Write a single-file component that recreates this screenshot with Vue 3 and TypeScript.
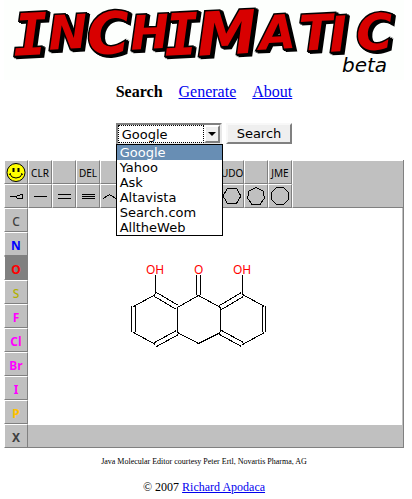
<script setup lang="ts">
import { ref } from 'vue'

interface LogoLetter {
  char: string
  x: number
  y: number
  size: number
  slab?: boolean
}

interface Atom {
  symbol: string
  color: string
  light?: boolean
}

const logo: LogoLetter[] = [
  { char: 'I', x: 14, y: 55, size: 58, slab: true },
  { char: 'N', x: 49, y: 49, size: 47 },
  { char: 'C', x: 88, y: 54, size: 58 },
  { char: 'H', x: 131, y: 49, size: 47 },
  { char: 'I', x: 165, y: 55, size: 58, slab: true },
  { char: 'M', x: 198, y: 55, size: 60 },
  { char: 'A', x: 260, y: 49, size: 47 },
  { char: 'T', x: 300, y: 50, size: 49 },
  { char: 'I', x: 330, y: 51, size: 49 },
  { char: 'C', x: 357, y: 50, size: 50 },
]

const engines = ['Google', 'Yahoo', 'Ask', 'Altavista', 'Search.com', 'AlltheWeb']
const engine = ref('Google')

const commands = ['smiley', 'CLR', '', 'DEL', '', '', '', '', '', 'UDO', '', 'JME']

const bonds = [
  { name: 'Stereo bond', path: 'M5 11.5H10L17 9.5V13.5H13L10 11.5' },
  { name: 'Single bond', path: 'M5 11.5H18' },
  { name: 'Double bond', path: 'M5 9.5H18M5 13.5H18' },
  { name: 'Triple bond', path: 'M5 9.5H18M5 11.5H18M5 13.5H18' },
  { name: 'Chain', path: 'M2 13.5L8.500 9.5L15 13.5L21 9.5' },
  { name: 'Ring 3', path: '' },
  { name: 'Ring 4', path: '' },
  { name: 'Ring 5', path: '' },
  { name: 'Ring 5 aromatic', path: '' },
  { name: 'Ring 6', path: 'M2 11L6.500 3.500H15.500L20 11L15.500 18.500H6.500Z' },
  { name: 'Ring 7', path: 'M11 2.500L18 6L19.500 13L15 19.500H7L2.500 13L4 6Z' },
  { name: 'Ring 8', path: 'M7.500 2.500H14.500L19.500 7.500V14.500L14.500 19.500H7.500L2.500 14.500V7.500Z' },
]

const atoms: Atom[] = [
  { symbol: 'C', color: '#404040', light: true },
  { symbol: 'N', color: '#0000ff' },
  { symbol: 'O', color: '#ff0000' },
  { symbol: 'S', color: '#b0b000', light: true },
  { symbol: 'F', color: '#ff00ff' },
  { symbol: 'Cl', color: '#ff00ff' },
  { symbol: 'Br', color: '#ff00ff' },
  { symbol: 'I', color: '#ff00ff' },
  { symbol: 'P', color: '#ffc000' },
  { symbol: 'X', color: '#404040' },
]
const atom = ref('O')
</script>

<template>
  <main class="page">
    <h1 class="brand">
      <svg class="logo" viewBox="0 0 400 80" role="img" aria-label="InChIMatic beta">
        <g class="letters" transform="translate(-4 0)">
          <text
            v-for="(l, i) in logo"
            :key="i"
            :x="l.x"
            :y="l.y"
            :font-size="l.size"
            :class="{ slab: l.slab }"
            :transform="`rotate(-3 ${l.x + 16} ${l.y})`"
          >{{ l.char }}</text>
        </g>
        <text class="beta" x="338" y="72">beta</text>
      </svg>
    </h1>

    <nav class="nav">
      <b>Search</b>
      <a href="#generate">Generate</a>
      <a href="#about">About</a>
    </nav>

    <form class="search" @submit.prevent>
      <div class="picker">
        <select v-model="engine" class="engine" aria-label="Search engine">
          <option v-for="e in engines" :key="e">{{ e }}</option>
        </select>
        <span class="arrow" aria-hidden="true">
          <svg width="8" height="4" viewBox="0 0 8 4"><path d="M0 0H8L4 4Z" /></svg>
        </span>
        <ul class="options" role="listbox" aria-label="Search engines">
          <li
            v-for="e in engines"
            :key="e"
            role="option"
            :aria-selected="e === engine"
            :class="{ current: e === engine }"
            @click="engine = e"
          >{{ e }}</li>
        </ul>
      </div>
      <button class="submit" type="submit">Search</button>
    </form>

    <section class="editor" aria-label="Molecule editor">
      <div class="toolbar">
        <button v-for="(c, i) in commands" :key="i" class="cell top" type="button">
          <svg v-if="c === 'smiley'" width="22" height="22" viewBox="0 0 22 22" aria-label="Smiley">
            <circle cx="11" cy="11.500" r="9" fill="#ffff00" stroke="#000" />
            <path d="M8.500 7V11M13.500 7V11" stroke="#000" stroke-width="2" />
            <path d="M5 13Q6 17 11 17T17 13M4 13.500L6 12.500M16 12.500L18 13.500" fill="none" stroke="#000" />
          </svg>
          <template v-else>{{ c }}</template>
        </button>
        <div class="rest"></div>
      </div>
      <div class="toolbar">
        <button v-for="b in bonds" :key="b.name" class="cell" type="button" :aria-label="b.name">
          <svg class="line" width="22" height="22" viewBox="0 0 22 22"><path :d="b.path" /></svg>
        </button>
        <div class="rest low"></div>
      </div>
      <div class="work">
        <div class="atoms">
          <button
            v-for="a in atoms"
            :key="a.symbol"
            type="button"
            class="cell atom"
            :class="{ light: a.light, active: a.symbol === atom }"
            :style="{ color: a.color }"
            @click="atom = a.symbol"
          >{{ a.symbol }}</button>
        </div>
        <div class="board">
          <div class="canvas">
            <svg class="molecule" width="260" height="217" viewBox="28 208 260 217" role="img" aria-label="Molecule">
              <path
                d="M155.500 275V294M242.500 275V294M196.500 275V295M200.500 275V295
                   M155.500 294.500L133.500 306.500M131.500 306V332M135.500 306V332
                   M133.500 332.500L155.500 344.500M177.500 307V332M220.500 307V332
                   M177.500 307.500L198.500 295.500L220.500 307.500
                   M177.500 332.500L198.500 343.500L220.500 332.500
                   M156.500 292.500L178.500 305.500M154.500 296.500L176.500 309.500
                   M154.500 342.500L176.500 330.500M156.500 346.500L178.500 334.500
                   M241.500 292.500L219.500 305.500M243.500 296.500L221.500 309.500
                   M243.500 342.500L221.500 330.500M241.500 346.500L219.500 334.500
                   M242.500 294.500L264.500 306.500M262.500 306V332M265.500 306V332
                   M264.500 332.500L242.500 344.500"
              />
              <text x="146" y="274">OH</text>
              <text x="194" y="274">O</text>
              <text x="233" y="274">OH</text>
            </svg>
          </div>
          <div class="status"></div>
        </div>
      </div>
    </section>

    <footer>
      <p class="credit">Java Molecular Editor courtesy Peter Ertl, Novartis Pharma, AG</p>
      <p class="copyright">© 2007 <a href="#author">Richard Apodaca</a></p>
    </footer>
  </main>
</template>

<style>
body {
  background: #fff;
}
</style>

<style scoped>
.page {
  padding: 0 8px 0 4px;
  font-family: 'Liberation Serif', serif;
  font-size: 16px;
  color: #000;
}
.brand {
  margin: 0;
  line-height: 0;
  background: #fdfffd;
}
.logo {
  width: 100%;
  overflow: visible;
}
.letters {
  font-family: 'DejaVu Sans', sans-serif;
  font-weight: bold;
  font-style: italic;
  fill: #d80000;
  stroke: #000;
  stroke-width: 3px;
  stroke-linejoin: miter;
  paint-order: stroke;
  filter: drop-shadow(1px 1px 0 #000) drop-shadow(2px 1px 0 #000);
}
.slab {
  font-family: 'DejaVu Sans Mono', monospace;
}
.beta {
  font: italic 20px 'DejaVu Sans', sans-serif;
}
.nav {
  display: flex;
  justify-content: center;
  gap: 16px;
  padding-top: 2px;
  line-height: 20px;
}
a {
  color: #0000ee;
}
.search {
  display: flex;
  justify-content: center;
  gap: 4px;
  margin: 21px 0 15px;
  font-family: 'DejaVu Sans', sans-serif;
  font-size: 13px;
}
.picker {
  position: relative;
  width: 106px;
}
.engine {
  box-sizing: border-box;
  display: block;
  width: 100%;
  height: 22px;
  padding: 0 0 0 4px;
  border: 2px solid;
  border-color: #808080 #e8e8e8 #e8e8e8 #808080;
  border-radius: 0;
  appearance: none;
  background: #fff;
  color: #000;
  font: inherit;
  outline: 0;
}
.picker::before {
  content: '';
  position: absolute;
  inset: 2px 18px 2px 2px;
  border: 1px dotted #000;
  pointer-events: none;
}
.arrow {
  position: absolute;
  top: 2px;
  right: 2px;
  box-sizing: border-box;
  display: grid;
  place-items: center;
  width: 16px;
  height: 18px;
  border: 2px solid;
  border-color: #fff #808080 #808080 #fff;
  background: #efefef;
  pointer-events: none;
}
.options {
  position: absolute;
  z-index: 1;
  top: 21px;
  left: 0;
  width: 105px;
  margin: 0;
  padding: 0;
  border: 1px solid #000;
  background: #fff;
  list-style: none;
  line-height: 15px;
}
.options li {
  padding-left: 3px;
}
.options .current {
  background: #688eb4;
  color: #fff;
}
.submit {
  height: 21px;
  padding: 0 9px;
  border: 2px solid;
  border-color: #f8f8f8 #808080 #808080 #f8f8f8;
  background: #efefef;
  color: #000;
  font: inherit;
  line-height: 16px;
}
.editor {
  border-right: 1px solid #808080;
  background: #c0c0c0;
}
.toolbar {
  display: flex;
}
.cell {
  box-sizing: border-box;
  flex: none;
  display: grid;
  place-items: center;
  width: 24px;
  height: 24px;
  padding: 0;
  border: 1px solid;
  border-color: #fff #808080 #808080 #fff;
  background: #c0c0c0;
  color: #000;
  font: 10px 'Noto Sans', sans-serif;
}
.top {
  padding-top: 2px;
}
.top svg {
  margin-top: -2px;
}
.rest {
  flex: 1;
  border-top: 1px solid #fff;
  border-left: 1px solid #fff;
}
.low {
  border-top-color: #c0c0c0;
  border-bottom: 1px solid #808080;
}
.line path {
  fill: none;
  stroke: #000;
  shape-rendering: crispEdges;
}
.work {
  display: flex;
}
.atom {
  padding-top: 2px;
  font-size: 12px;
  font-weight: bold;
}
.light {
  font-weight: 500;
}
.active {
  border-color: #808080 #808080 #808080 #fff;
  background: #808080;
}
.board {
  flex: 1;
  display: flex;
  flex-direction: column;
}
.canvas {
  margin-right: 1px;
  background: #fff;
  line-height: 0;
  overflow: hidden;
}
.molecule path {
  fill: none;
  stroke: #000;
  shape-rendering: crispEdges;
}
.molecule text {
  fill: #f00;
  font: 12px 'Noto Sans', sans-serif;
}
.status {
  flex: 1;
  border-bottom: 1px solid #808080;
}
footer {
  text-align: center;
}
.credit {
  margin: 8px 0 12px;
  font-size: 8px;
  line-height: 12px;
}
.copyright {
  margin: 0;
  font-size: 12px;
  line-height: 14px;
}
</style>
